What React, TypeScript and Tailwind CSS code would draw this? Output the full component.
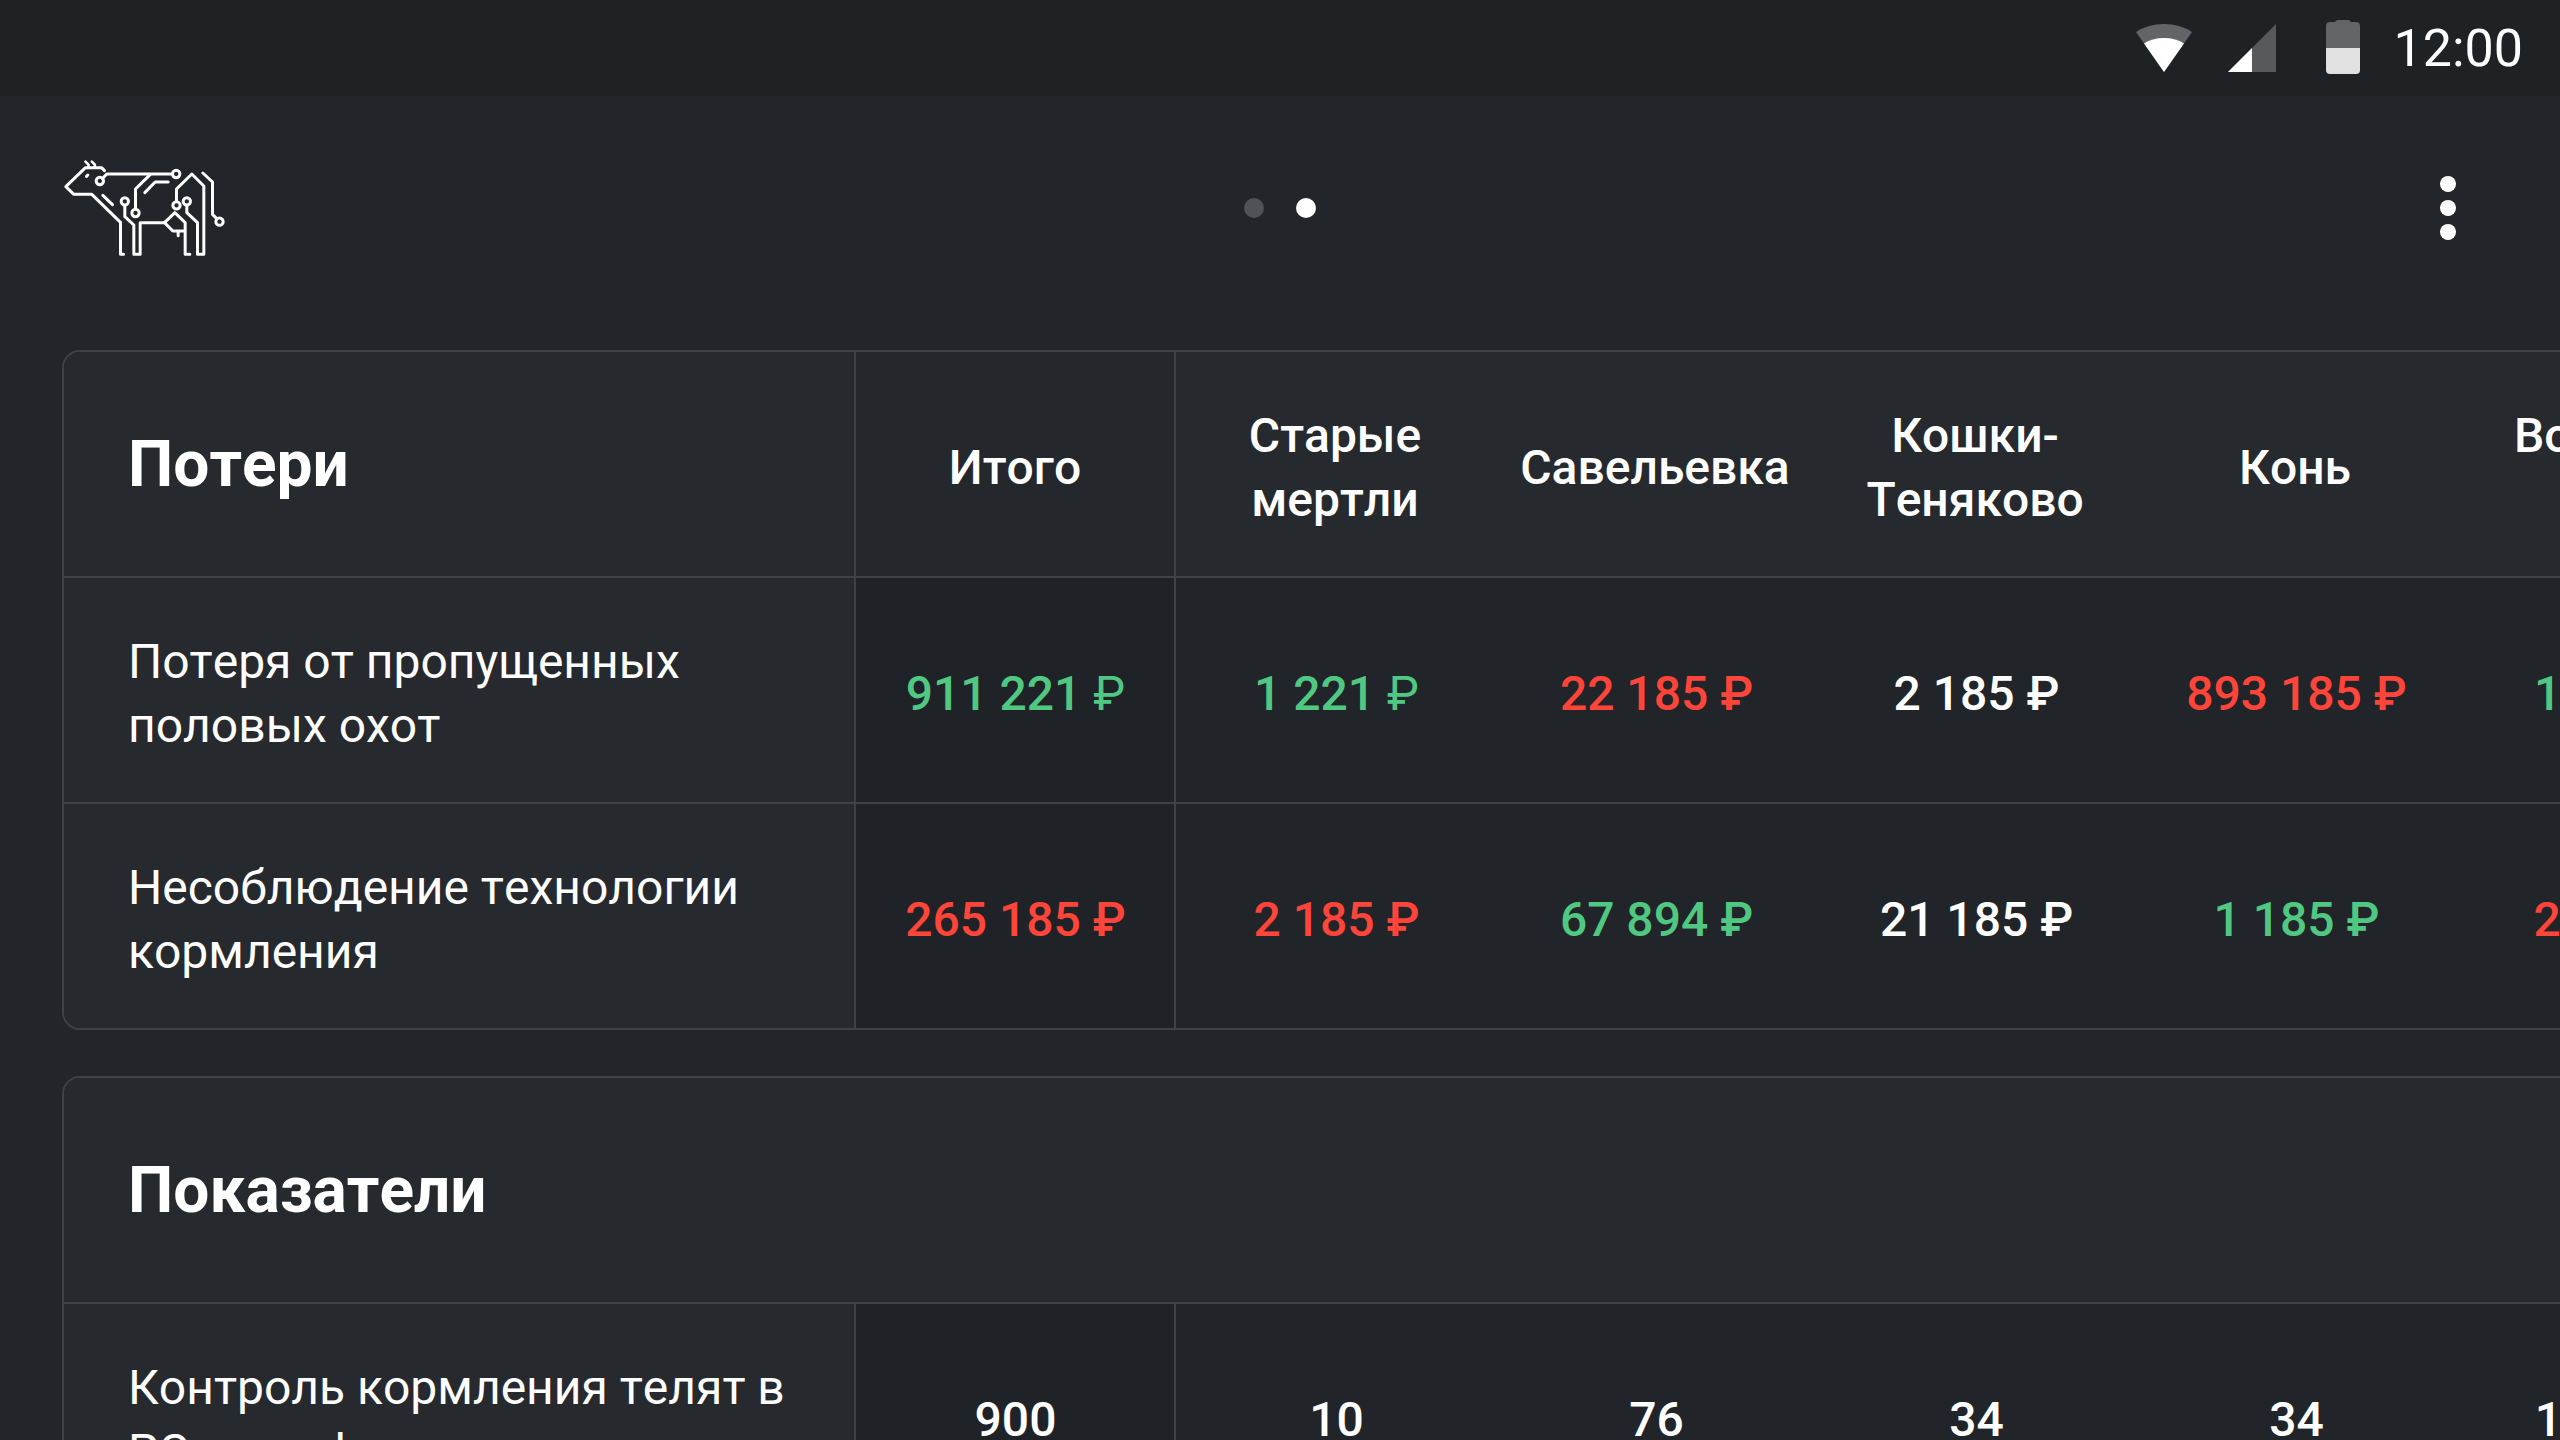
import React from "react";

type Tone = "green" | "red" | "white";
type Cell = { value: string; tone: Tone; lightSign?: boolean };

const toneClass: Record<Tone, string> = {
  green: "text-[#50c882]",
  red: "text-[#ff453a]",
  white: "text-white",
};

const headers = ["Старые мертли", "Савельевка", "Кошки-Теняково", "Конь", "Восходы мир"];

const losses: { label: string; cells: Cell[] }[] = [
  {
    label: "Потеря от пропущенных половых охот",
    cells: [
      { value: "911 221", tone: "green", lightSign: true },
      { value: "1 221", tone: "green", lightSign: true },
      { value: "22 185", tone: "red" },
      { value: "2 185", tone: "white" },
      { value: "893 185", tone: "red" },
      { value: "1 221", tone: "green", lightSign: true },
    ],
  },
  {
    label: "Несоблюдение технологии кормления",
    cells: [
      { value: "265 185", tone: "red" },
      { value: "2 185", tone: "red" },
      { value: "67 894", tone: "green" },
      { value: "21 185", tone: "white" },
      { value: "1 185", tone: "green" },
      { value: "2 185", tone: "red" },
    ],
  },
];

const metrics = ["900", "10", "76", "34", "34", "134000"];

function StatusBar() {
  return (
    <header className="flex h-24 shrink-0 items-center bg-[#1f2225] pr-[37px]">
      <svg className="ml-auto h-24 w-[240px]" viewBox="2120 0 240 96">
        <path d="M2136 32Q2148 24 2164 24Q2180 24 2192 32L2164 72Z" fill="#626567" />
        <path d="M2144 43.500Q2152 38 2164 38Q2176 38 2184 43.500L2164 72Z" fill="#fff" />
        <path d="M2276 24V72H2228Z" fill="#57595c" />
        <path d="M2252 48V72H2228Z" fill="#fff" />
        <path d="M2326 48V26Q2326 22 2330 22H2335L2337 20H2349L2351 22H2356Q2360 22 2360 26V48Z" fill="#636466" />
        <path d="M2326 48H2360V70Q2360 74 2356 74H2330Q2326 74 2326 70Z" fill="#e1e1e1" />
      </svg>
      <time className="ml-[34px] pt-0.5 text-[52px] leading-[96px]">12:00</time>
    </header>
  );
}

function CowLogo() {
  return (
    <svg
      className="h-[125px] w-[190px]"
      viewBox="-1.5 0 570 375"
      fill="none"
      stroke="#fff"
      strokeWidth="9"
      strokeLinecap="round"
      strokeLinejoin="round"
    >
      <path d="M162 77L153 68H105L46 125L70 148H124L210 232V328H219" />
      <path d="M105 50L114 59V67M124 50L133 59V67" strokeWidth="8" />
      <path d="M108 94L112 90" strokeWidth="9" />
      <path d="M157 151L186 179" />
      <circle cx="148" cy="108" r="11" />
      <path d="M156 100L169 87H364" />
      <circle cx="377" cy="87" r="11" />
      <path d="M299 89L255 132V192" />
      <circle cx="255" cy="204" r="11" />
      <path d="M283 143L314 111H353" />
      <circle cx="223" cy="169" r="11" />
      <path d="M223 181V215L250 240V328H269V233H342" />
      <path d="M342 233L373 203L404 233V328H418M342 233L367 258H404M383 258V272" />
      <circle cx="378" cy="181" r="11" />
      <path d="M378 169V132L424 87L460 123V328H441V233L409 203V181" />
      <circle cx="409" cy="169" r="11" />
      <path d="M457 84L486 111V208L498 220" />
      <circle cx="507" cy="230" r="11" />
    </svg>
  );
}

function AppBar() {
  return (
    <nav className="grid h-[254px] shrink-0 grid-cols-3 items-start pt-[49px]">
      <div className="pl-[50px]">
        <CowLogo />
      </div>
      <div className="mt-[53px] flex justify-center gap-8">
        <span className="size-5 rounded-full bg-[#505256]" />
        <span className="size-5 rounded-full bg-white" />
      </div>
      <div className="mt-[31px] flex flex-col items-end gap-2 pr-[104px]">
        <span className="size-4 rounded-full bg-white" />
        <span className="size-4 rounded-full bg-white" />
        <span className="size-4 rounded-full bg-white" />
      </div>
    </nav>
  );
}

function LabelCell({ children }: { children: React.ReactNode }) {
  return (
    <div className="w-[792px] shrink-0 border-r-2 border-[#404142] bg-[#26292e] pt-[52px] pl-16">
      <p className="w-[680px]">{children}</p>
    </div>
  );
}

function ValueCell({ index, children }: { index: number; children: React.ReactNode }) {
  const frame = index === 0 ? "border-r-2 border-[#404142] bg-[#1f2227]" : "bg-[#212429]";
  return (
    <div className={`flex w-80 shrink-0 items-center justify-center pt-2 pl-px font-medium ${frame}`}>
      {children}
    </div>
  );
}

export default function App() {
  return (
    <div className="flex h-[1440px] w-[2560px] flex-col overflow-hidden bg-[#22252a] font-[Roboto,sans-serif] text-5xl leading-[64px] text-white [font-kerning:none]">
      <StatusBar />
      <AppBar />
      <main className="flex flex-col gap-[46px] pl-[62px]">
        <section className="w-[2800px] shrink-0 overflow-hidden rounded-[18px] border-2 border-[#404142]">
          <div className="flex h-[226px] border-b-2 border-[#404142] bg-[#26292e]">
            <div className="flex w-[792px] shrink-0 items-center border-r-2 border-[#404142] pt-0.5 pl-16">
              <h2 className="text-[64px] font-bold">Потери</h2>
            </div>
            <div className="flex w-80 shrink-0 items-center justify-center border-r-2 border-[#404142] bg-[#24272c] pt-2 font-medium">
              Итого
            </div>
            {headers.map((name) => (
              <div key={name} className="flex w-80 shrink-0 items-center justify-center pt-2 pr-[57px] pl-[55px] text-center font-medium">
                {name === "Савельевка" ? <span className="-mx-8">{name}</span> : name}
              </div>
            ))}
          </div>
          {losses.map((row, r) => (
            <div key={row.label} className={r === 0 ? "flex h-[226px] border-b-2 border-[#404142]" : "flex h-56"}>
              <LabelCell>{row.label}</LabelCell>
              {row.cells.map((cell, i) => (
                <ValueCell key={i} index={i}>
                  <span className={toneClass[cell.tone]}>
                    {cell.value} <span className={cell.lightSign ? "font-normal" : "font-medium"}>₽</span>
                  </span>
                </ValueCell>
              ))}
            </div>
          ))}
        </section>
        <section className="w-[2800px] shrink-0 overflow-hidden rounded-[18px] border-2 border-[#404142]">
          <div className="flex h-[226px] items-center border-b-2 border-[#404142] bg-[#26292e] pt-0.5 pl-16">
            <h2 className="text-[64px] font-bold">Показатели</h2>
          </div>
          <div className="flex h-56">
            <LabelCell>Контроль кормления телят в РС и профилактика</LabelCell>
            {metrics.map((value, i) => (
              <ValueCell key={i} index={i}>
                {value}
              </ValueCell>
            ))}
          </div>
        </section>
      </main>
    </div>
  );
}
